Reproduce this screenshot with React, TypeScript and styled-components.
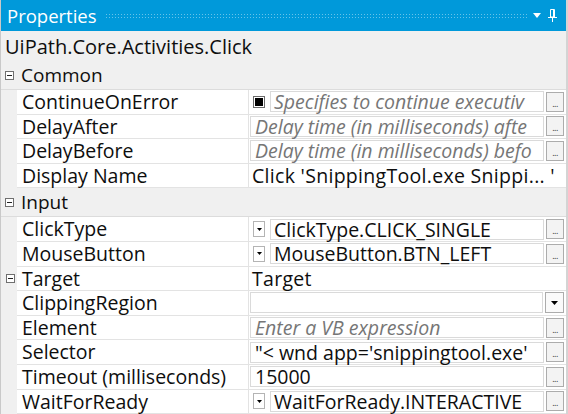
import React, { ReactElement } from "react";
import styled, { createGlobalStyle } from "styled-components";

const GlobalStyle = createGlobalStyle`
  html, body {
    margin: 0;
    padding: 0;
    background: #f0f0f0;
  }
  body {
    font-family: "Open Sans", "Noto Sans", sans-serif;
  }
`;

type Prop = {
  name: string;
  value?: string;
  placeholder?: boolean;
  kind: "field" | "check" | "drop" | "plain" | "combo";
  button?: boolean;
  expander?: boolean;
};

type Category = {
  title: string;
  props: Prop[];
};

const categories: Category[] = [
  {
    title: "Common",
    props: [
      { name: "ContinueOnError", kind: "check", value: "Specifies to continue executiv", placeholder: true, button: true },
      { name: "DelayAfter", kind: "field", value: "Delay time (in milliseconds) afte", placeholder: true, button: true },
      { name: "DelayBefore", kind: "field", value: "Delay time (in milliseconds) befo", placeholder: true, button: true },
      { name: "Display Name", kind: "plain", value: "Click 'SnippingTool.exe Snippi... '" },
    ],
  },
  {
    title: "Input",
    props: [
      { name: "ClickType", kind: "drop", value: "ClickType.CLICK_SINGLE", button: true },
      { name: "MouseButton", kind: "drop", value: "MouseButton.BTN_LEFT", button: true },
      { name: "Target", kind: "plain", value: "Target", expander: true },
      { name: "ClippingRegion", kind: "combo", value: "" },
      { name: "Element", kind: "field", value: "Enter a VB expression", placeholder: true, button: true },
      { name: "Selector", kind: "field", value: "\"< wnd app='snippingtool.exe'", button: true },
      { name: "Timeout (milliseconds)", kind: "field", value: "15000", button: true },
      { name: "WaitForReady", kind: "drop", value: " WaitForReady.INTERACTIVE", button: true },
    ],
  },
];

export default function App(): ReactElement {
  return (
    <>
      <GlobalStyle />
      <Panel>
        <TitleBar>
          <TitleText>Properties</TitleText>
          <Grip />
          <TitleIcons>
            <svg width="8" height="5" viewBox="0 0 8 5">
              <path d="M0 0 H8 L4 5 Z" fill="#fff" />
            </svg>
            <svg width="9" height="13" viewBox="0 0 9 13">
              <path d="M2.5 0.5 H6.5 V8 H2.5 Z" fill="none" stroke="#fff" />
              <path d="M5 1 H6 V8 H5 Z" fill="#fff" />
              <path d="M0 8 H9 V9 H0 Z" fill="#fff" />
              <path d="M4 9 H5 V13 H4 Z" fill="#fff" />
            </svg>
          </TitleIcons>
        </TitleBar>
        <TypeName>UiPath.Core.Activities.Click</TypeName>
        {categories.map((cat) => (
          <div key={cat.title}>
            <CategoryRow>
              <Toggle />
              <CategoryTitle>{cat.title}</CategoryTitle>
            </CategoryRow>
            {cat.props.map((p) => (
              <PropRow key={p.name}>
                <Gutter>{p.expander && <Toggle />}</Gutter>
                <NameCell>{p.name}</NameCell>
                <ValueCell>
                  {p.kind === "plain" && <PlainValue>{p.value}</PlainValue>}
                  {p.kind === "check" && (
                    <SideBox>
                      <CheckMark />
                    </SideBox>
                  )}
                  {p.kind === "drop" && (
                    <SideBox $tall>
                      <svg width="5" height="3" viewBox="0 0 5 3">
                        <path d="M0 0 H5 L2.5 3 Z" fill="#000" />
                      </svg>
                    </SideBox>
                  )}
                  {p.kind !== "plain" && (
                    <Field $placeholder={!!p.placeholder} $inset={p.kind === "check" || p.kind === "drop"}>
                      {p.value}
                    </Field>
                  )}
                  {p.button && <DotsButton>...</DotsButton>}
                  {p.kind === "combo" && (
                    <DropButton>
                      <svg width="7" height="4" viewBox="0 0 7 4">
                        <path d="M0 0 H7 L3.5 4 Z" fill="#000" />
                      </svg>
                    </DropButton>
                  )}
                </ValueCell>
              </PropRow>
            ))}
          </div>
        ))}
      </Panel>
    </>
  );
}

const Panel = styled.div`
  width: 568px;
  height: 414px;
  box-sizing: border-box;
  background: #f0f0f0;
  border-left: 1px solid #c9c9c9;
  border-right: 2px solid #d4d4d4;
  overflow: hidden;
  color: #0e0e0e;
`;

const TitleBar = styled.div`
  height: 31px;
  background: #0099da;
  display: flex;
  align-items: center;
  padding-left: 6px;
`;

const TitleText = styled.div`
  color: #ffffff;
  font-size: 18.5px;
  line-height: 31px;
`;

const Grip = styled.div`
  flex: 1;
  height: 6px;
  margin: 1px 30px 0 8px;
  background-image: radial-gradient(circle, rgba(255, 255, 255, 0.4) 0.6px, transparent 0.9px);
  background-size: 3px 3px;
`;

const TitleIcons = styled.div`
  display: flex;
  align-items: center;
  gap: 7px;
  padding-right: 9px;
  margin-left: -24px;
`;

const TypeName = styled.div`
  height: 29px;
  display: flex;
  align-items: center;
  padding-left: 4px;
  font-size: 20px;
  padding-top: 1px;
`;

const CategoryRow = styled.div`
  height: 28px;
  display: flex;
  align-items: center;
  padding-left: 4px;
  border-bottom: 1px solid #dcdcdc;
`;

const CategoryTitle = styled.span`
  font-size: 19px;
  margin-left: 7px;
`;

const Toggle = styled.span`
  width: 9px;
  height: 9px;
  box-sizing: border-box;
  border: 1px solid #6f6f6f;
  background: #fff;
  position: relative;
  display: inline-block;
  &::after {
    content: "";
    position: absolute;
    left: 1px;
    right: 1px;
    top: 3px;
    height: 1px;
    background: #222;
  }
`;

const PropRow = styled.div`
  display: grid;
  grid-template-columns: 16px 232px 1fr;
  height: 24.6px;
`;

const Gutter = styled.div`
  background: #f0f0f0;
  display: flex;
  align-items: center;
  justify-content: center;
  padding-left: 3px;
`;

const NameCell = styled.div`
  background: #ffffff;
  border-bottom: 1px solid #e3e3e3;
  border-right: 1px solid #e3e3e3;
  padding-left: 5px;
  font-size: 19.5px;
  line-height: 23.6px;
  white-space: nowrap;
`;

const ValueCell = styled.div`
  background: #ffffff;
  border-bottom: 1px solid #e3e3e3;
  display: flex;
  align-items: center;
  gap: 2px;
  padding: 0 2px 0 1px;
  min-width: 0;
`;

const PlainValue = styled.div`
  font-size: 19.5px;
  line-height: 23.6px;
  padding-left: 2px;
  white-space: nowrap;
  letter-spacing: 0.3px;
`;

const SideBox = styled.div<{ $tall?: boolean }>`
  width: 12px;
  height: ${(p) => (p.$tall ? "16px" : "12px")};
  box-sizing: border-box;
  border: 1px solid ${(p) => (p.$tall ? "#b4b4b4" : "#6a6a6a")};
  background: #fff;
  margin-left: 3px;
  margin-right: 3px;
  flex: none;
  display: flex;
  align-items: center;
  justify-content: center;
`;

const CheckMark = styled.div`
  width: 8px;
  height: 8px;
  background: #000;
`;

const Field = styled.div<{ $placeholder: boolean; $inset: boolean }>`
  flex: 1;
  min-width: 0;
  height: 21px;
  box-sizing: border-box;
  border: 1px solid #dadada;
  padding-left: ${(p) => (p.$inset ? "3px" : "4px")};
  font-size: 19.5px;
  line-height: 19px;
  white-space: nowrap;
  font-style: ${(p) => (p.$placeholder ? "italic" : "normal")};
  color: ${(p) => (p.$placeholder ? "#767676" : "#0e0e0e")};
`;

const DotsButton = styled.div`
  width: 18px;
  height: 20px;
  flex: none;
  box-sizing: border-box;
  border: 1px solid #acacac;
  background: #f3f3f3;
  font-size: 9px;
  line-height: 22px;
  text-align: center;
  color: #333;
  letter-spacing: -0.5px;
`;

const DropButton = styled.div`
  width: 19px;
  height: 21px;
  flex: none;
  box-sizing: border-box;
  border: 1px solid #acacac;
  background: #fafafa;
  display: flex;
  align-items: center;
  justify-content: center;
`;
